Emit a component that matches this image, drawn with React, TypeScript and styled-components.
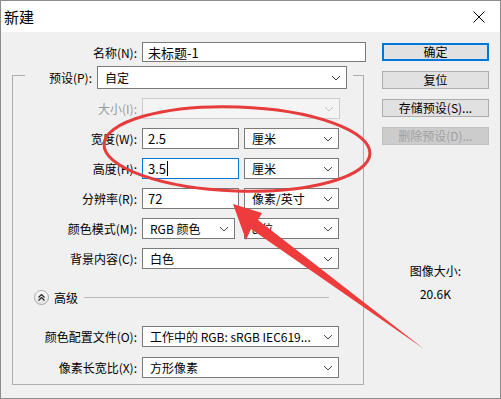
import React from "react";
import styled, { createGlobalStyle } from "styled-components";

const GlobalStyle = createGlobalStyle`
  html, body {
    margin: 0;
    padding: 0;
    background: #f0f0f0;
  }
  body {
    font-family: "Noto Sans CJK SC", "Microsoft YaHei", sans-serif;
    font-size: 12px;
    color: #000;
  }
  * {
    box-sizing: border-box;
  }
`;

const Window = styled.div`
  position: relative;
  width: 501px;
  height: 399px;
  border: 1px solid #8c8c8c;
  background: #f0f0f0;
  overflow: hidden;
`;

const TitleBar = styled.div`
  height: 31px;
  background: #fff;
  display: flex;
  align-items: center;
  justify-content: space-between;
  padding: 0 15px 0 3px;
  font-size: 15px;
  line-height: 20px;
`;

const Body = styled.div`
  display: flex;
  gap: 16px;
  padding: 10px 0 0 11px;
`;

const Form = styled.div`
  width: 354px;
  display: flex;
  flex-direction: column;
`;

const Row = styled.div<{ $h?: number }>`
  display: flex;
  align-items: center;
  height: ${p => p.$h ?? 21}px;
`;

const Label = styled.div<{ $w: number; $disabled?: boolean }>`
  width: ${p => p.$w}px;
  margin-right: 5px;
  text-align: right;
  white-space: nowrap;
  line-height: 17px;
  color: ${p => (p.$disabled ? "#9a9a9a" : "#000")};
`;

const TextBox = styled.div<{ $w: number; $h?: number; $focused?: boolean }>`
  width: ${p => p.$w}px;
  height: ${p => p.$h ?? 21}px;
  background: #fff;
  border: 1px solid ${p => (p.$focused ? "#0078d7" : "#7a7a7a")};
  padding-left: 5px;
  display: flex;
  align-items: center;
  font-size: 13px;
  line-height: 17px;
  white-space: nowrap;
`;

const Caret = styled.span`
  display: inline-block;
  width: 1px;
  height: 15px;
  background: #000;
  margin-left: 1px;
`;

const Select = styled.div<{ $w: number; $h?: number; $disabled?: boolean }>`
  width: ${p => p.$w}px;
  height: ${p => p.$h ?? 21}px;
  background: ${p => (p.$disabled ? "#f4f4f4" : "#fff")};
  border: 1px solid ${p => (p.$disabled ? "#cccccc" : "#7a7a7a")};
  padding: 0 5px 0 7px;
  display: flex;
  align-items: center;
  justify-content: space-between;
  line-height: 17px;
  white-space: nowrap;
  overflow: hidden;

  svg {
    flex-shrink: 0;
  }
`;

const Gap = styled.div<{ $w: number }>`
  width: ${p => p.$w}px;
  flex-shrink: 0;
`;

const Group = styled.fieldset`
  width: 352px;
  margin: -1px 0 0 0;
  padding: 0 0 6px 0;
  border: 1px solid #adadad;
  min-width: 0;
`;

const GroupLegend = styled.legend`
  margin-left: 12px;
  padding: 5px 6px 0 0;
  display: flex;
  align-items: center;
`;

const Rows = styled.div<{ $gap: number; $top: number }>`
  display: flex;
  flex-direction: column;
  gap: ${p => p.$gap}px;
  margin-top: ${p => p.$top}px;
`;

const AdvancedRow = styled.div`
  display: flex;
  align-items: center;
  height: 16px;
  margin-top: 20px;
  padding-left: 21px;
`;

const RoundToggle = styled.div`
  width: 15px;
  height: 15px;
  border-radius: 50%;
  border: 1px solid #a8a8a8;
  background: linear-gradient(#ffffff, #e2e2e2);
  display: flex;
  align-items: center;
  justify-content: center;
  margin-right: 5px;
`;

const AdvancedText = styled.span`
  line-height: 17px;
`;

const Divider = styled.div`
  width: 245px;
  height: 1px;
  background: #b9b9b9;
  margin-left: 6px;
`;

const Side = styled.div`
  width: 107px;
  display: flex;
  flex-direction: column;
  padding-top: 1px;
`;

const Buttons = styled.div`
  display: flex;
  flex-direction: column;
  gap: 10px;
`;

const Button = styled.div<{ $primary?: boolean; $disabled?: boolean }>`
  height: 18px;
  display: flex;
  align-items: center;
  justify-content: center;
  line-height: 16px;
  background: ${p => (p.$disabled ? "#cccccc" : "#e1e1e1")};
  border: 1px solid
    ${p => (p.$primary ? "#0078d7" : p.$disabled ? "#bfbfbf" : "#adadad")};
  box-shadow: ${p => (p.$primary ? "inset 0 0 0 1px #0078d7" : "none")};
  color: ${p => (p.$disabled ? "#a0a0a0" : "#000")};
`;

const SizeInfo = styled.div`
  margin-top: 117px;
  display: flex;
  flex-direction: column;
  align-items: center;
  gap: 6px;
  line-height: 17px;
`;

const Annotations = styled.svg`
  position: absolute;
  left: -1px;
  top: -1px;
  pointer-events: none;
`;

const Chevron = ({ disabled }: { disabled?: boolean }) => (
  <svg width="10" height="6" viewBox="0 0 10 6">
    <polyline
      points="1,1 5,5 9,1"
      fill="none"
      stroke={disabled ? "#c4c4c4" : "#444"}
      strokeWidth="1"
    />
  </svg>
);

const CloseIcon = () => (
  <svg width="12" height="12" viewBox="0 0 12 12">
    <path d="M0.5 0.5 L11.5 11.5 M11.5 0.5 L0.5 11.5" stroke="#000" strokeWidth="1" />
  </svg>
);

const CollapseIcon = () => (
  <svg width="7" height="7" viewBox="0 0 7 7">
    <polyline points="0.5,3.5 3.5,0.5 6.5,3.5" fill="none" stroke="#222" strokeWidth="1.2" />
    <polyline points="0.5,6.5 3.5,3.5 6.5,6.5" fill="none" stroke="#222" strokeWidth="1.2" />
  </svg>
);

const Dropdown: React.FC<{
  w: number;
  h?: number;
  disabled?: boolean;
  children?: React.ReactNode;
}> = ({ w, h, disabled, children }) => (
  <Select $w={w} $h={h} $disabled={disabled}>
    <span>{children}</span>
    <Chevron disabled={disabled} />
  </Select>
);

export default function App() {
  return (
    <>
      <GlobalStyle />
      <Window>
        <TitleBar>
          <span>新建</span>
          <CloseIcon />
        </TitleBar>
        <Body>
          <Form>
            <Row $h={20}>
              <Label $w={125}>名称(N):</Label>
              <TextBox $w={224} $h={20}>
                未标题-1
              </TextBox>
            </Row>
            <Group>
              <GroupLegend>
                <Label $w={67}>预设(P):</Label>
                <Dropdown w={250} h={23}>
                  自定
                </Dropdown>
              </GroupLegend>
              <Rows $gap={9} $top={9}>
                <Row>
                  <Label $w={124} $disabled>
                    大小(I):
                  </Label>
                  <Dropdown w={198} disabled />
                </Row>
                <Row>
                  <Label $w={124}>宽度(W):</Label>
                  <TextBox $w={97}>2.5</TextBox>
                  <Gap $w={5} />
                  <Dropdown w={95}>厘米</Dropdown>
                </Row>
                <Row>
                  <Label $w={124}>高度(H):</Label>
                  <TextBox $w={97} $focused>
                    3.5
                    <Caret />
                  </TextBox>
                  <Gap $w={5} />
                  <Dropdown w={95}>厘米</Dropdown>
                </Row>
                <Row>
                  <Label $w={124}>分辨率(R):</Label>
                  <TextBox $w={97}>72</TextBox>
                  <Gap $w={5} />
                  <Dropdown w={95}>像素/英寸</Dropdown>
                </Row>
                <Row>
                  <Label $w={124}>颜色模式(M):</Label>
                  <Dropdown w={93}>RGB 颜色</Dropdown>
                  <Gap $w={9} />
                  <Dropdown w={95}>8 位</Dropdown>
                </Row>
                <Row>
                  <Label $w={124}>背景内容(C):</Label>
                  <Dropdown w={197}>白色</Dropdown>
                </Row>
              </Rows>
              <AdvancedRow>
                <RoundToggle>
                  <CollapseIcon />
                </RoundToggle>
                <AdvancedText>高级</AdvancedText>
                <Divider />
              </AdvancedRow>
              <Rows $gap={10} $top={21}>
                <Row>
                  <Label $w={124}>颜色配置文件(O):</Label>
                  <Dropdown w={197}>工作中的 RGB: sRGB IEC619...</Dropdown>
                </Row>
                <Row>
                  <Label $w={124}>像素长宽比(X):</Label>
                  <Dropdown w={197}>方形像素</Dropdown>
                </Row>
              </Rows>
            </Group>
          </Form>
          <Side>
            <Buttons>
              <Button $primary>确定</Button>
              <Button>复位</Button>
              <Button>存储预设(S)...</Button>
              <Button $disabled>删除预设(D)...</Button>
            </Buttons>
            <SizeInfo>
              <span>图像大小:</span>
              <span>20.6K</span>
            </SizeInfo>
          </Side>
        </Body>
        <Annotations width="501" height="399" viewBox="0 0 501 399">
          <ellipse
            cx="237"
            cy="149"
            rx="133"
            ry="42"
            transform="rotate(2 237 149)"
            fill="none"
            stroke="#e63c3c"
            strokeWidth="3"
          />
          <polygon
            points="233,204 262,213 258,220 424,349 251,229 246,240"
            fill="#ee3b3b"
          />
        </Annotations>
      </Window>
    </>
  );
}
